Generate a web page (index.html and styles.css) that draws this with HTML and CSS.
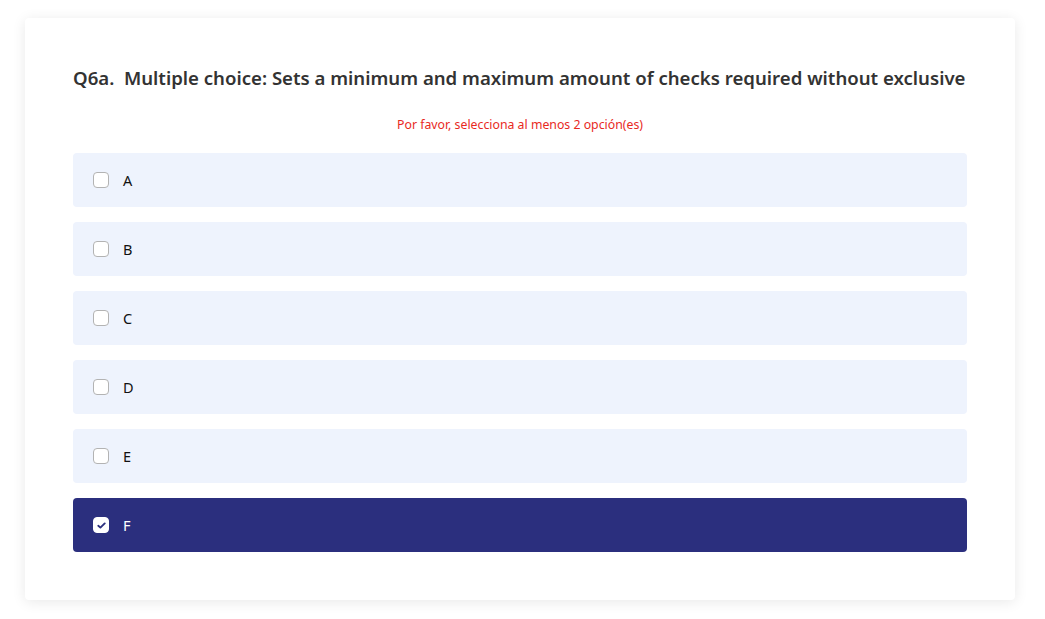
FILE: index.html
```html
<!DOCTYPE html>
<html lang="es">
<head>
  <meta charset="UTF-8" />
  <meta name="viewport" content="width=device-width, initial-scale=1.0"/>
  <title>Q6a</title>
  <link rel="stylesheet" href="styles.css">
</head>
<body>
  <div class="card">
    <h1 class="question">Q6a.&nbsp; Multiple choice: Sets a minimum and maximum amount of checks required without exclusive</h1>
    <div class="error">Por favor, selecciona al menos 2 opción(es)</div>
    <div class="options">
      <label class="option"><span class="box"></span><span class="text">A</span></label>
      <label class="option"><span class="box"></span><span class="text">B</span></label>
      <label class="option"><span class="box"></span><span class="text">C</span></label>
      <label class="option"><span class="box"></span><span class="text">D</span></label>
      <label class="option"><span class="box"></span><span class="text">E</span></label>
      <label class="option selected">
        <span class="box">
          <svg width="9" height="7" viewBox="0 0 9 7"><path d="M1.3 3.8 L3.4 5.6 L7.7 1.4" fill="none" stroke="#2b2f7e" stroke-width="1.9" stroke-linecap="round" stroke-linejoin="round"/></svg>
        </span>
        <span class="text">F</span>
      </label>
    </div>
  </div>
</body>
</html>
```

FILE: styles.css
```css
body {
  font-family: "Noto Sans", "Open Sans", sans-serif;
  background-color: #fff;
  margin: 0;
  padding: 18px 30px 19px 25px;
}

.card {
  background-color: #fff;
  border-radius: 4px;
  box-shadow: 0 2px 14px rgba(0,0,0,0.09);
  padding: 47px 48px 48px 48px;
}

.question {
  margin: 0;
  font-size: 18.6px;
  font-weight: 600;
  color: #333;
  line-height: 26px;
  white-space: nowrap;
}

.error {
  margin-top: 26px;
  text-align: center;
  font-size: 12.3px;
  color: #e8291e;
  line-height: 16px;
}

.options {
  display: flex;
  flex-direction: column;
  gap: 15px;
  margin-top: 20px;
}

.option {
  display: flex;
  align-items: center;
  height: 54px;
  padding-left: 20px;
  background-color: #eef3fd;
  border-radius: 4px;
  font-size: 14.5px;
  color: #111;
}

.box {
  width: 14px;
  height: 14px;
  border: 1px solid #b3b3b3;
  border-radius: 4px;
  background-color: #fff;
  margin-right: 14px;
  display: flex;
  align-items: center;
  justify-content: center;
}

.selected {
  background-color: #2b2f7e;
  color: #fff;
}

.selected .box {
  border-color: #fff;
}
```
